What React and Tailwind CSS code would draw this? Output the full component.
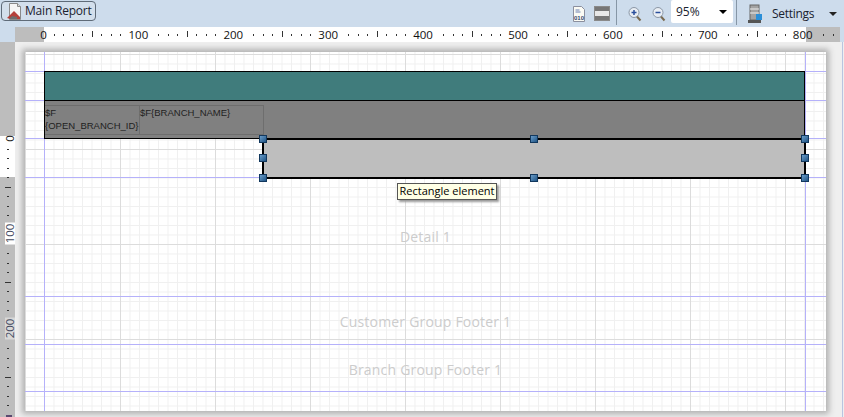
import React from "react";

const font = { fontFamily: "'Open Sans', sans-serif" };

// ticks every 9.5px (10 report units at 95%), long tick every 5th, none next to a number
const hideTick = (i) => i % 10 === 0 || i % 10 === 9 || (i % 10 === 1 && i > 10);

const hTicks = [];
for (let i = 1; i < 84; i++) if (!hideTick(i)) hTicks.push(i);
const vTicks = [];
for (let i = 1; i < 29; i++) if (!hideTick(i)) vTicks.push(i);

function TopRuler() {
  return (
    <svg width="825" height="15" className="block">
      <rect width="825" height="15" fill="#ffffff" />
      <rect x="0" width="29" height="15" fill="#bdbdbd" />
      <rect x="791" width="34" height="15" fill="#bdbdbd" />
      {hTicks.map((i) => {
        const x = Math.round(29 + i * 9.5);
        return i % 5 === 0 ? (
          <rect key={i} x={x} y="4" width="1" height="6" fill="#333" />
        ) : (
          <rect key={i} x={x} y="7" width="1" height="2" fill="#333" />
        );
      })}
      {[0, 100, 200, 300, 400, 500, 600, 700, 800].map((n, i) => (
        <text key={n} x={28.5 + i * 94.9} y="11.5" textAnchor="middle" fontSize="11.5" fill="#111" fontFamily="'Open Sans', sans-serif">
          {n}
        </text>
      ))}
    </svg>
  );
}

function LeftRuler() {
  return (
    <svg width="15" height="375" className="block shrink-0 overflow-visible">
      <rect width="15" height="375" fill="#bdbdbd" />
      <rect y="94" width="15" height="41" fill="#ffffff" />
      {vTicks.map((i) => {
        const y = Math.round(97 + i * 9.5);
        return i % 5 === 0 ? (
          <rect key={i} x="5" y={y} width="6" height="1" fill="#333" />
        ) : (
          <rect key={i} x="7" y={y} width="2" height="1" fill="#333" />
        );
      })}
      {[0, 100, 200].map((n, i) => (
        <g key={n} transform={`translate(14 ${96.5 + i * 95}) rotate(-90)`}>
          {n > 0 && <rect x="-11" y="-9" width="22" height="10" fill={n === 200 ? "#d8d8d8" : "#ffffff"} />}
          <text textAnchor="middle" fontSize="11.5" fill={n === 0 ? "#222" : "#444a60"} fontFamily="'Open Sans', sans-serif">
            {n}
          </text>
        </g>
      ))}
      <rect x="6" y="373" width="6" height="2" fill="#5a4a70" />
    </svg>
  );
}

function Handle({ className }) {
  return (
    <div
      className={`absolute size-2 border border-[#12385e] bg-[linear-gradient(135deg,#6a9cc8,#1f5485)] ${className}`}
    />
  );
}

function Band({ h, label, labelClass, children }) {
  return (
    <div className={`relative flex justify-center border-b border-[#b5b1fa] ${h}`}>
      {label && <div className={`text-[14px] tracking-[0.2px] text-[#cccccc] ${labelClass}`}>{label}</div>}
      {children}
    </div>
  );
}

function ReportIcon() {
  return (
    <svg width="18" height="19" viewBox="0 0 18 19">
      <path d="M3.5 1.5h8l3 3v13h-11z" fill="#f6f6f6" stroke="#8a8a8a" />
      <path d="M11.5 1.5v3h3" fill="#dcdcdc" stroke="#8a8a8a" />
      <path d="M1 16l4-4 3-3 3 3 3 3v2H4z" fill="#b5403a" />
      <path d="M3 17l3-3 5 1v2z" fill="#6d6d6d" />
    </svg>
  );
}

function Zoom({ minus }) {
  return (
    <svg width="14" height="16" viewBox="0 0 14 16">
      <path d="M8.5 10l4 4.5" stroke="#7a6a50" strokeWidth="2" />
      <circle cx="6" cy="6.5" r="5" fill="#e9eef4" stroke="#8b97a6" />
      <path d={minus ? "M3.5 6.5h5" : "M3.5 6.5h5M6 4v5"} stroke="#2a4f9c" strokeWidth="1.5" />
    </svg>
  );
}

export default function App() {
  return (
    <div className="flex h-[417px] w-[844px] flex-col overflow-hidden bg-[#efefef]" style={font}>
      {/* toolbar */}
      <div className="flex h-[27px] shrink-0 items-center bg-[#cddcec] text-[12px] text-[#1a2230]">
        <button className="ml-[1px] mt-[1px] flex h-[20px] w-[95px] items-center gap-px self-start rounded-[4px] border border-[#5f6b78] bg-[#d3dfec] pl-[4px]">
          <ReportIcon />
          <span className="whitespace-nowrap text-[12px] leading-none tracking-[-0.2px]">Main Report</span>
        </button>
        <div className="ml-auto flex h-full items-center">
          <svg width="14" height="16" viewBox="0 0 14 16">
            <path d="M1.5.5h8l3 3v12h-11z" fill="#fbfbf4" stroke="#8b8f9e" />
            <path d="M3.5 4h4M3.5 6h5" stroke="#6a7fb0" />
            <text x="7" y="13.5" textAnchor="middle" fontSize="6" fontWeight="700" fill="#33476e" fontFamily="'Liberation Sans', sans-serif">
              010
            </text>
          </svg>
          <div className="ml-2 flex h-[15px] w-4 flex-col border border-[#8a8a8a] bg-white">
            <div className="h-[4px] bg-[#777777]" />
            <div className="h-[5px] bg-[#e8e8e8]" />
            <div className="h-[4px] bg-[#777777]" />
          </div>
          <div className="ml-[6px] h-[25px] w-px self-start bg-[#8696a6]" />
          <div className="ml-[11px] flex items-center gap-[10px]">
            <Zoom />
            <Zoom minus />
          </div>
          <div className="ml-[5px] flex h-[23px] w-[62px] items-center justify-between self-start rounded-[2px] bg-white pl-[5px] pr-[6px] text-[12px]">
            <span>95%</span>
            <span className="size-0 border-x-[4px] border-t-[4px] border-x-transparent border-t-black" />
          </div>
          <div className="ml-[3px] h-[25px] w-px self-start bg-[#8696a6]" />
          <svg width="15" height="20" viewBox="0 0 15 20" className="ml-[11px]">
            <rect x="2" y="1" width="9" height="15" fill="#a3a3a3" stroke="#666" />
            <path d="M2 5h9M2 9h9" stroke="#eee" />
            <rect x="0" y="16" width="13" height="3" fill="#555" />
            <rect x="8" y="10" width="6" height="6" fill="#2b8fd8" />
          </svg>
          <span className="ml-[9px] w-[42px] whitespace-nowrap text-[12px] tracking-[-0.3px]">Settings</span>
          <span className="ml-[15px] mr-[7px] size-0 border-x-[4px] border-t-[4px] border-x-transparent border-t-[#222]" />
        </div>
      </div>

      {/* ruler row */}
      <div className="flex h-[15px] shrink-0 bg-[#cddcec] pl-[15px]">
        <TopRuler />
      </div>

      <div className="flex min-h-0 flex-1">
        <LeftRuler />
        <div className="w-[10px] shrink-0" />

        {/* report page */}
        <div className="mt-[10px] h-[359px] w-[801px] shrink-0 bg-white bg-[linear-gradient(#dcdcdc_1px,transparent_1px),linear-gradient(90deg,#dcdcdc_1px,transparent_1px),linear-gradient(#f0f0f0_1px,transparent_1px),linear-gradient(90deg,#f0f0f0_1px,transparent_1px)] bg-[size:95px_95px,95px_95px,9.5px_9.5px,9.5px_9.5px] bg-[position:0_2px,0_0,0_2px,0_0] shadow-[0_0_6px_3px_#b0b0b0]">
          <div className="relative h-full">
            {/* margin guides */}
            <div className="absolute inset-y-0 left-[19px] w-px bg-[#b5b1fa]" />
            <div className="absolute inset-y-0 left-[780px] w-px bg-[#b5b1fa]" />

            <div className="relative flex flex-col">
              <div className="h-[20px] border-b border-[#b5b1fa]" />

              <Band h="h-[29px]">
                <div className="absolute left-[19px] top-[-1px] h-[30px] w-[761px] border border-black bg-[#407c7c]" />
              </Band>

              <Band h="h-[38px]">
                <div className="absolute left-[19px] top-[-1px] flex h-[39px] w-[761px] items-start border border-black bg-[#808080] pt-[4px] text-[9.5px] leading-[13px] text-[#222]" style={{ fontFamily: "'Liberation Sans', sans-serif" }}>
                  <div className="h-[30px] w-[95px] shrink-0 whitespace-nowrap border-y border-r border-[#6e6e6e]">
                    $F
                    <br />
                    {"{OPEN_BRANCH_ID}"}
                  </div>
                  <div className="h-[30px] w-[124px] shrink-0 whitespace-nowrap border-y border-r border-[#6e6e6e]">
                    {"$F{BRANCH_NAME}"}
                  </div>
                </div>
              </Band>

              <Band h="h-[39px]">
                <div className="absolute left-[237px] top-[-1px] z-10 h-[41px] w-[544px] border-2 border-black bg-[#bebebe]">
                  <Handle className="left-[-5px] top-[-5px]" />
                  <Handle className="left-[266px] top-[-5px]" />
                  <Handle className="right-[-5px] top-[-5px]" />
                  <Handle className="left-[-5px] top-[14px]" />
                  <Handle className="right-[-5px] top-[14px]" />
                  <Handle className="bottom-[-5px] left-[-5px]" />
                  <Handle className="bottom-[-5px] left-[266px]" />
                  <Handle className="bottom-[-5px] right-[-5px]" />
                </div>
              </Band>

              <Band h="h-[119px]" label="Detail 1" labelClass="pt-[48px]">
                <div className="absolute left-[372px] top-[5px] z-20 flex h-[17px] w-[100px] items-center justify-center whitespace-nowrap border border-[#555] bg-[#ffffe6] text-[11px] text-black shadow-[2px_2px_2px_#999]">
                  Rectangle element
                </div>
              </Band>
              <Band h="h-[48px]" label="Customer Group Footer 1" labelClass="pt-[14px]" />
              <Band h="h-[47px]" label="Branch Group Footer 1" labelClass="pt-[14px]" />
            </div>
          </div>
        </div>
        <div className="ml-auto mr-[1px] w-px bg-[#b9c4e0]" />
      </div>
    </div>
  );
}
